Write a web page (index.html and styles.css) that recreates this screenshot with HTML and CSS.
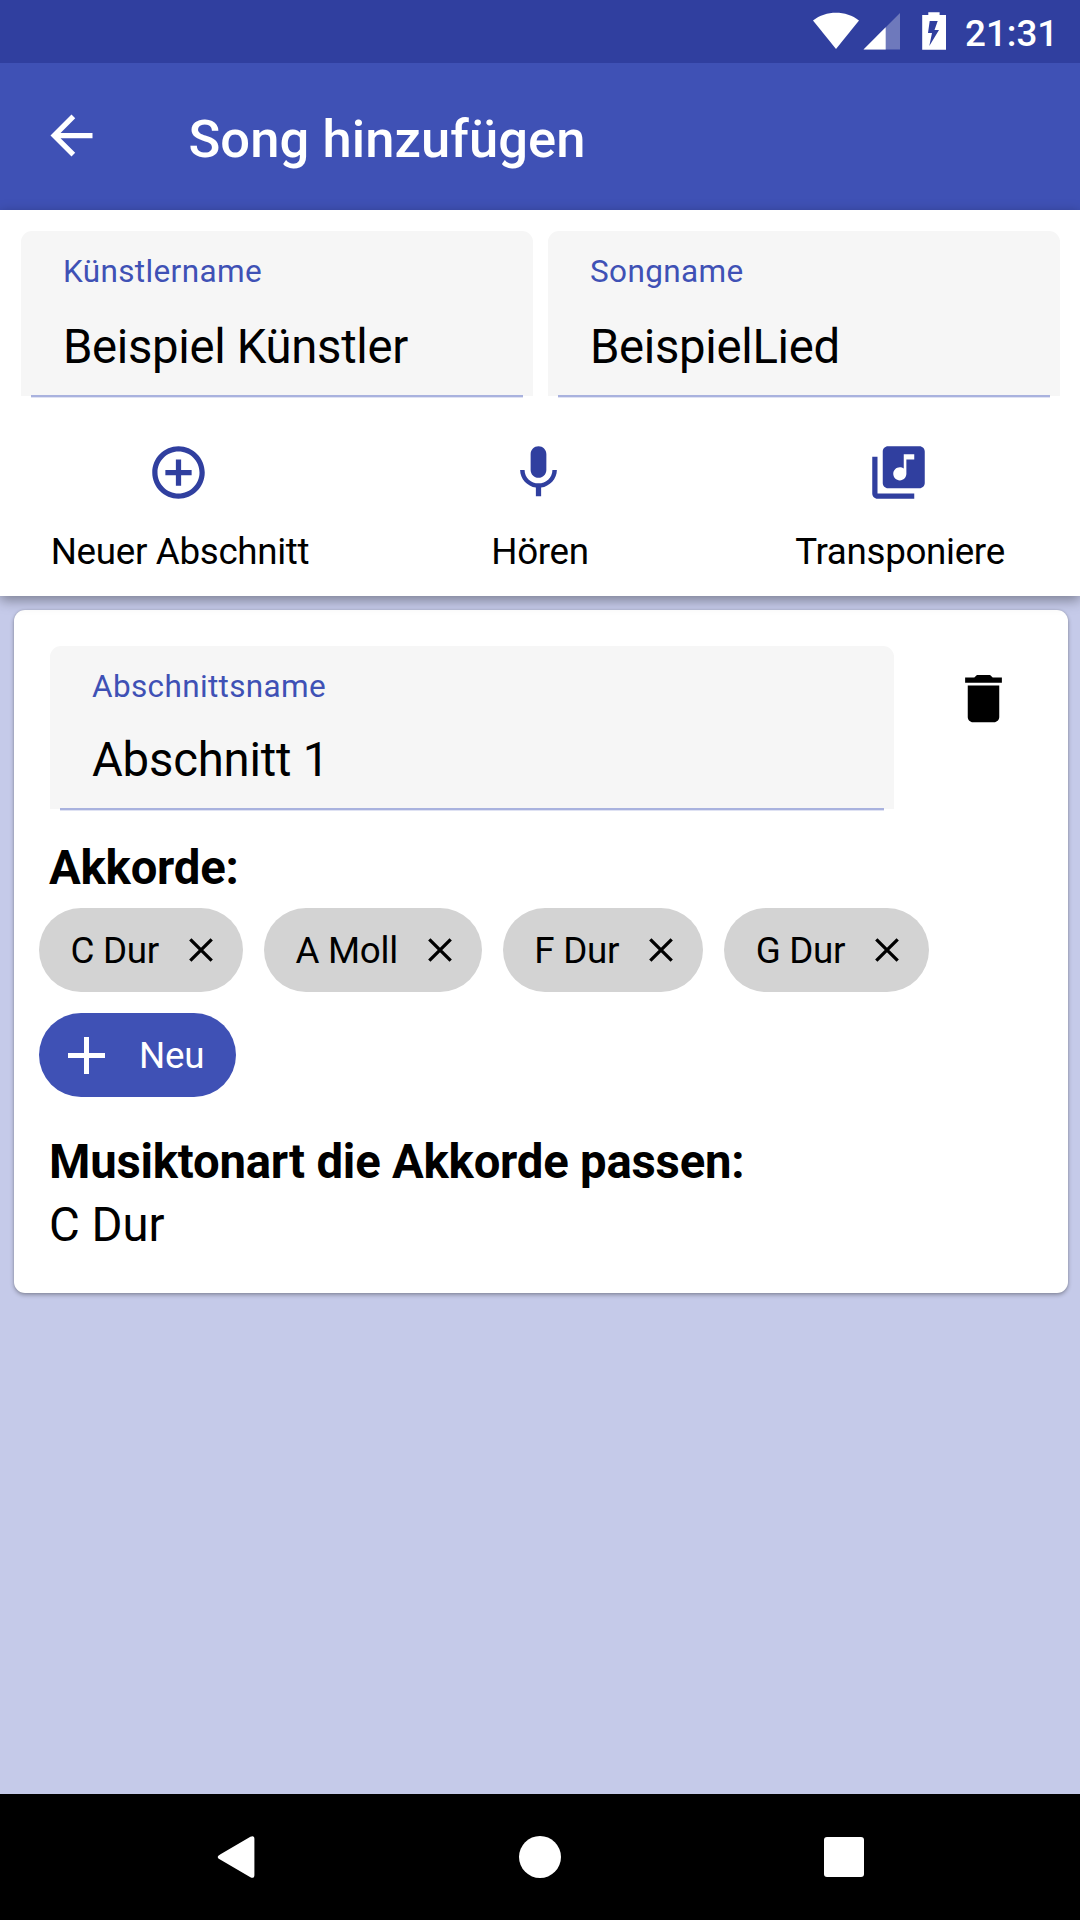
FILE: index.html
```html
<!DOCTYPE html>
<html lang="de">
<head>
<meta charset="utf-8">
<title>Song hinzufügen</title>
<link rel="stylesheet" href="styles.css">
</head>
<body>
<div class="screen">
  <div class="status">
    <svg class="status-icons" viewBox="0 0 140 63" width="140" height="63">
      <path fill="#fff" d="M3 20.500C16 10.200 36 10.200 49 20.500L26 49z"/>
      <path fill="#fff" fill-opacity=".3" d="M90 13V49.500H53.500z"/>
      <path fill="#fff" d="M75.700 27.300V49.500H53.500z"/>
      <path fill="#fff" fill-rule="evenodd" d="M118.300 12.300h11.300v2.700h6.400v34.800h-23.800V15h6.100zM119.700 21l-1.700 12h4l-2.700 13 9.700-16h-4.500l3.200-9z"/>
    </svg>
    <span class="clock">21:31</span>
  </div>

  <header class="toolbar">
    <svg class="icon" viewBox="0 0 24 24"><path d="M20 11H7.830l5.590-5.590L12 4l-8 8 8 8 1.410-1.410L7.830 13H20v-2z"/></svg>
    <h1 class="title">Song hinzufügen</h1>
  </header>

  <section class="song">
    <div class="fields">
      <div class="field">
        <div class="label">Künstlername</div>
        <div class="value">Beispiel Künstler</div>
      </div>
      <div class="field">
        <div class="label">Songname</div>
        <div class="value">BeispielLied</div>
      </div>
    </div>
    <div class="actions">
      <div class="action">
        <svg class="icon" viewBox="0 0 24 24"><path d="M13 7h-2v4H7v2h4v4h2v-4h4v-2h-4V7zm-1-5C6.480 2 2 6.480 2 12s4.480 10 10 10 10-4.480 10-10S17.520 2 12 2zm0 18c-4.410 0-8-3.590-8-8s3.590-8 8-8 8 3.590 8 8-3.590 8-8 8z"/></svg>
        <span>Neuer Abschnitt</span>
      </div>
      <div class="action">
        <svg class="icon" viewBox="0 0 24 24"><path d="M12 14c1.660 0 2.990-1.340 2.990-3L15 5c0-1.660-1.340-3-3-3S9 3.340 9 5v6c0 1.660 1.340 3 3 3zm5.300-3c0 3-2.540 5.100-5.300 5.100S6.700 14 6.700 11H5c0 3.410 2.720 6.230 6 6.720V21h2v-3.280c3.280-.480 6-3.300 6-6.720h-1.700z"/></svg>
        <span>Hören</span>
      </div>
      <div class="action">
        <svg class="icon" viewBox="0 0 24 24"><path d="M20 2H8c-1.100 0-2 .9-2 2v12c0 1.100.9 2 2 2h12c1.100 0 2-.9 2-2V4c0-1.100-.9-2-2-2zm-2 5h-3v5.500c0 1.380-1.120 2.500-2.500 2.500S10 13.880 10 12.500s1.120-2.500 2.500-2.500c.570 0 1.080.190 1.500.510V5h4v2zM4 6H2v14c0 1.100.9 2 2 2h14v-2H4V6z"/></svg>
        <span>Transponiere</span>
      </div>
    </div>
  </section>

  <main class="content">
    <article class="card">
      <div class="section-head">
        <div class="field">
          <div class="label">Abschnittsname</div>
          <div class="value">Abschnitt 1</div>
        </div>
        <svg class="icon delete" viewBox="0 0 24 24"><path d="M6 19c0 1.100.9 2 2 2h8c1.100 0 2-.9 2-2V7H6v12zM19 4h-3.500l-1-1h-5l-1 1H5v2h14V4z"/></svg>
      </div>
      <h2 class="heading">Akkorde:</h2>
      <div class="chips">
        <div class="chip"><span>C Dur</span><svg class="remove" viewBox="0 0 24 24"><path d="M1.300 1.300l21.400 21.400M22.700 1.300L1.300 22.700"/></svg></div>
        <div class="chip"><span>A Moll</span><svg class="remove" viewBox="0 0 24 24"><path d="M1.300 1.300l21.400 21.400M22.700 1.300L1.300 22.700"/></svg></div>
        <div class="chip"><span>F Dur</span><svg class="remove" viewBox="0 0 24 24"><path d="M1.300 1.300l21.400 21.400M22.700 1.300L1.300 22.700"/></svg></div>
        <div class="chip"><span>G Dur</span><svg class="remove" viewBox="0 0 24 24"><path d="M1.300 1.300l21.400 21.400M22.700 1.300L1.300 22.700"/></svg></div>
        <div class="chip add"><svg class="plus" viewBox="0 0 37 37"><path d="M16 0h5v16h16v5H21v16h-5V21H0v-5h16z"/></svg><span>Neu</span></div>
      </div>
      <h2 class="heading key">Musiktonart die Akkorde passen:</h2>
      <p class="result">C Dur</p>
    </article>
  </main>

  <nav class="navbar">
    <svg viewBox="0 0 42 42"><path d="M5.500 18.200L35.400 .7Q39.400-1 39.400 3V39Q39.400 43 35.400 41.300L5.500 23.800Q-.200 21 5.500 18.200z"/></svg>
    <svg viewBox="0 0 42 42"><circle cx="21" cy="21" r="21"/></svg>
    <svg viewBox="0 0 42 42"><rect x="1" y="1" width="40" height="40" rx="3"/></svg>
  </nav>
</div>
</body>
</html>
```
FILE: styles.css
```css
* { box-sizing: border-box; }

body {
  margin: 0;
  font-family: Roboto, "Noto Sans", sans-serif;
  color: #000;
}

h1, h2, p { margin: 0; }

.screen {
  display: flex;
  flex-direction: column;
  width: 1080px;
  height: 1920px;
  overflow: hidden;
  background: #c5cae9;
  white-space: nowrap;
}

.icon {
  display: block;
  flex: none;
  width: 63px;
  height: 63px;
  fill: currentColor;
}

/* Status bar */
.status {
  flex: none;
  display: flex;
  justify-content: flex-end;
  height: 63px;
  padding-right: 24px;
  background: #303f9f;
  color: #fff;
}

.status-icons { flex: none; }

.clock {
  width: 106px;
  padding-left: 15px;
  font-size: 36.750px;
  font-weight: 500;
  line-height: 68px;
}

/* Toolbar */
.toolbar {
  flex: none;
  display: flex;
  align-items: center;
  gap: 86px;
  height: 147px;
  padding-left: 40px;
  background: #3f51b5;
  color: #fff;
}

.toolbar .icon {
  margin-left: -.500px;
  margin-bottom: 2px;
}

.title {
  padding-top: 5px;
  font-size: 52.500px;
  font-weight: 500;
  letter-spacing: .08px;
}

/* Song header */
.song {
  position: relative;
  z-index: 1;
  flex: none;
  height: 386px;
  padding-top: 21px;
  background: #fff;
  box-shadow: 0 4px 12px rgba(0, 0, 0, .38);
}

.fields {
  display: flex;
  gap: 15px;
  padding: 0 20px 0 21px;
}

.field {
  position: relative;
  flex: 1;
  height: 165px;
  padding: 19px 42px 0;
  border-radius: 11px 11px 0 0;
  background: #f6f6f6;
}

.field::after {
  content: "";
  position: absolute;
  left: 10px;
  right: 10px;
  bottom: -1px;
  height: 2px;
  background: #a9b2de;
  box-shadow: 0 1px #dfe2f3;
}

.label {
  font-size: 31.500px;
  line-height: 44px;
  letter-spacing: .36px;
  color: #3f51b5;
}

.value {
  margin-top: 25px;
  font-size: 47.250px;
  line-height: 56px;
  letter-spacing: -.32px;
}

.actions {
  display: grid;
  grid-template-columns: repeat(3, 1fr);
  padding-top: 45px;
}

.action {
  display: flex;
  flex-direction: column;
  align-items: center;
  gap: 26px;
  font-size: 36.750px;
  line-height: 44px;
  letter-spacing: -.32px;
}

.action .icon {
  margin-right: 3px;
  color: #303f9f;
}

/* Section card */
.content {
  flex: 1;
  padding: 14px 12px 0 14px;
}

.card {
  height: 683px;
  padding: 36px 36px 0 25px;
  border-radius: 11px;
  background: #fff;
  box-shadow: 0 2px 4px rgba(0, 0, 0, .3), 0 0 2px rgba(0, 0, 0, .15);
}

.section-head {
  display: flex;
  padding-left: 11px;
}

.section-head .field {
  flex: none;
  width: 844px;
  height: 163px;
}

.section-head .value {
  margin-top: 23px;
  letter-spacing: -.2px;
}

.delete { margin: 21px 0 0 58px; }

.heading {
  padding-left: 10px;
  margin-top: 31px;
  font-size: 47.250px;
  font-weight: 700;
  line-height: 56px;
  letter-spacing: -.2px;
}

.chips {
  display: flex;
  flex-wrap: wrap;
  gap: 21px;
  margin-top: 12px;
}

.chip {
  display: flex;
  align-items: center;
  height: 84px;
  padding: 0 30px 0 31.500px;
  border-radius: 42px;
  background: #d3d3d3;
  font-size: 36.750px;
  letter-spacing: -.28px;
}

.remove {
  width: 24px;
  height: 24px;
  margin-left: 30px;
  fill: none;
  stroke: #000;
  stroke-width: 3.300;
}

.add {
  padding: 0 32px 0 29px;
  background: #3f51b5;
  color: #fff;
}

.plus {
  width: 37px;
  height: 37px;
  margin-right: 34px;
  fill: #fff;
}

.key {
  margin-top: 34px;
  line-height: 63px;
}

.result {
  padding-left: 10px;
  font-size: 47.250px;
  line-height: 63px;
}

/* System navigation */
.navbar {
  flex: none;
  display: flex;
  justify-content: space-between;
  align-items: center;
  height: 126px;
  padding: 0 215px;
  background: #000;
}

.navbar svg {
  display: block;
  width: 42px;
  height: 42px;
  fill: #fff;
}
```
